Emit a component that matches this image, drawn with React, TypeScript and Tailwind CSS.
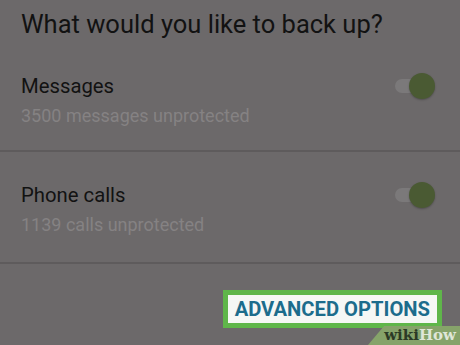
import React from "react";

function Toggle() {
  return (
    <div className="relative w-[44px] h-[28px] flex items-center mt-[-2px]">
      <div className="absolute left-[4px] w-[30px] h-[14px] rounded-full bg-[#7b797a]" />
      <div className="absolute right-[0px] w-[26px] h-[26px] rounded-full bg-[#4a5a33] shadow-[0_1px_2px_rgba(0,0,0,0.25)]" />
    </div>
  );
}

function Row({ title, sub }: { title: string; sub: string }) {
  return (
    <div className="flex items-start justify-between pl-[21px] pr-[25px]">
      <div className="flex flex-col">
        <div className="text-[20.3px] leading-[24px] text-[#121212]">{title}</div>
        <div className="text-[18px] leading-[22px] text-[#858283] mt-[7px]">{sub}</div>
      </div>
      <Toggle />
    </div>
  );
}

export default function App() {
  return (
    <div
      className="w-[460px] h-[345px] bg-[#6c696a] relative overflow-hidden flex flex-col"
      style={{ fontFamily: "Roboto, 'Noto Sans', sans-serif" }}
    >
      <div className="pl-[21px] pt-[6px] text-[25.5px] leading-[36px] text-[#121212]">
        What would you like to back up?
      </div>
      <div className="mt-[32px]">
        <Row title="Messages" sub="3500 messages unprotected" />
      </div>
      <div className="mt-[23px] h-[2px] bg-[#5e5b5c]" />
      <div className="mt-[31px]">
        <Row title="Phone calls" sub="1139 calls unprotected" />
      </div>
      <div className="mt-[26px] h-[2px] bg-[#5e5b5c]" />
      <div className="flex justify-end pr-[18px] mt-[26px]">
        <div className="border-[5px] border-[#5fb64a] bg-[#f5f7f5] px-[7px] h-[38px] flex items-center">
          <span className="text-[20.2px] font-bold text-[#1c6c8c]">ADVANCED OPTIONS</span>
        </div>
      </div>
      <div
        className="absolute right-0 bottom-0 w-[92px] h-[19px] bg-[#86a36a] flex items-center justify-end pr-[4px]"
        style={{ clipPath: "polygon(16px 0, 100% 0, 100% 100%, 0 100%)" }}
      >
        <span className="text-[15px] font-bold leading-none" style={{ fontFamily: "'DejaVu Serif', serif" }}>
          <span className="text-[#2c3a25]">wiki</span>
          <span className="text-[#dfe6d8]">How</span>
        </span>
      </div>
    </div>
  );
}
